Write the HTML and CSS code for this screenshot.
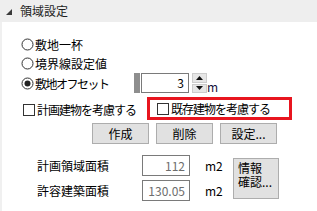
FILE: index.html
```html
<!DOCTYPE html>
<html lang="ja">
<head>
<meta charset="utf-8">
<link rel="stylesheet" href="styles.css">
</head>
<body>
<div class="header">
  <svg class="tri" width="6" height="6" viewBox="0 0 6 6"><polygon points="6,0 6,6 0,6" fill="#3a3a3a"/></svg>
  <span class="title">領域設定</span>
</div>
<div class="panel">
  <div class="radio-row">
    <svg class="radio" width="13" height="13" viewBox="0 0 13 13"><circle cx="6.5" cy="6.5" r="5.5" fill="#fff" stroke="#333" stroke-width="1"/></svg>
    <span>敷地一杯</span>
  </div>
  <div class="radio-row">
    <svg class="radio" width="13" height="13" viewBox="0 0 13 13"><circle cx="6.5" cy="6.5" r="5.5" fill="#fff" stroke="#333" stroke-width="1"/></svg>
    <span>境界線設定値</span>
  </div>
  <div class="offset-row">
    <div class="radio-row offset-label">
      <svg class="radio" width="13" height="13" viewBox="0 0 13 13"><circle cx="6.5" cy="6.5" r="5.5" fill="#fff" stroke="#333" stroke-width="1"/><circle cx="6.5" cy="6.5" r="3" fill="#222"/></svg>
      <span class="tighter">敷地オフセット</span>
    </div>
    <span class="grip"></span>
    <span class="num">3</span>
    <span class="spin">
      <span class="sb"><svg width="7" height="4" viewBox="0 0 7 4"><polygon points="3.5,0 7,4 0,4" fill="#111"/></svg></span>
      <span class="sb"><svg width="7" height="4" viewBox="0 0 7 4"><polygon points="0,0 7,0 3.5,4" fill="#111"/></svg></span>
    </span>
    <span class="unit">m</span>
  </div>
  <div class="check-row">
    <div class="check-item first">
      <span class="box"></span><span class="tight">計画建物を考慮する</span>
    </div>
    <div class="check-item highlight">
      <span class="box"></span><span class="tight">既存建物を考慮する</span>
    </div>
  </div>
  <div class="buttons">
    <button class="btn">作成</button>
    <button class="btn">削除</button>
    <button class="btn">設定...</button>
  </div>
  <div class="areas">
    <span class="lbl">計画領域面積</span>
    <span class="val">112</span>
    <span class="m2">m2</span>
    <button class="info"><span class="line">情報</span><span class="line">確認...</span></button>
    <span class="lbl">許容建築面積</span>
    <span class="val">130.05</span>
    <span class="m2">m2</span>
  </div>
</div>
</body>
</html>
```

FILE: styles.css
```css
html, body {
  margin: 0;
  padding: 0;
}
body {
  width: 317px;
  height: 211px;
  overflow: hidden;
  background: #fff;
  color: #000;
  font-family: "Noto Sans CJK JP", "Noto Sans", sans-serif;
  font-size: 12px;
}
.header {
  height: 22px;
  background: #eeeeee;
  display: flex;
  align-items: center;
  padding-left: 6px;
}
.tri {
  margin-right: 8px;
  margin-top: 2px;
}
.title {
  color: #1e1e1e;
  line-height: 22px;
}
.panel {
  box-sizing: border-box;
  height: 189px;
  border-left: 2px solid #f0f0f0;
  padding-top: 13px;
}
.tight {
  letter-spacing: -1px;
}
.tighter {
  letter-spacing: -1.5px;
}
.radio-row {
  display: flex;
  align-items: center;
  height: 19px;
  padding-left: 19px;
  gap: 1px;
  line-height: 19px;
}
.radio {
  flex: none;
}
.offset-row {
  display: flex;
  align-items: center;
  height: 20px;
}
.offset-label {
  box-sizing: border-box;
  width: 132px;
  height: 20px;
}
.grip {
  width: 6px;
  height: 20px;
  background: #8e8e8e;
  margin-right: 1px;
}
.num {
  box-sizing: border-box;
  width: 48px;
  height: 20px;
  border: 1px solid #7a7a7a;
  text-align: right;
  padding-right: 4px;
  line-height: 18px;
}
.spin {
  margin-left: 3px;
  width: 15px;
  height: 20px;
  display: flex;
  flex-direction: column;
  gap: 1px;
}
.sb {
  box-sizing: border-box;
  flex: 1;
  background: #e6e6e6;
  border: 1px solid #cccccc;
  display: flex;
  align-items: center;
  justify-content: center;
}
.unit {
  align-self: flex-end;
  line-height: 12px;
  margin-left: 0;
  color: #14143c;
}
.check-row {
  margin-top: 4px;
  display: flex;
  align-items: center;
  height: 23px;
}
.check-item {
  box-sizing: border-box;
  display: flex;
  align-items: center;
  gap: 2px;
  height: 23px;
  width: 145px;
  line-height: 17px;
}
.check-item.first {
  padding-left: 21px;
  padding-top: 2px;
}
.check-item.highlight {
  border: 3px solid #e8151f;
  padding-left: 7px;
}
.box {
  box-sizing: border-box;
  width: 12px;
  height: 12px;
  border: 1px solid #333;
  background: #fff;
  flex: none;
}
.buttons {
  margin-top: 3px;
  display: flex;
  gap: 7px;
  padding-left: 90px;
}
.btn, .info {
  box-sizing: border-box;
  margin: 0;
  background: #e1e1e1;
  border: 1px solid #adadad;
  font-family: inherit;
  font-size: 12px;
  color: #000;
  padding: 0;
}
.btn {
  width: 57px;
  height: 21px;
  line-height: 19px;
}
.areas {
  margin-top: 11px;
  display: grid;
  grid-template-columns: 105px 48px 43px 46px;
  grid-template-rows: 21px 21px;
  row-gap: 4px;
  padding-left: 35px;
}
.lbl {
  line-height: 21px;
}
.val {
  box-sizing: border-box;
  border: 1px solid #7a7a7a;
  text-align: right;
  padding-right: 4px;
  line-height: 19px;
  color: #6d6d6d;
}
.m2 {
  padding-left: 15px;
  line-height: 21px;
}
.info {
  grid-column: 4;
  grid-row: 1 / 3;
  align-self: center;
  width: 46px;
  height: 41px;
  text-align: left;
  padding: 2px 0 0 4px;
  display: flex;
  flex-direction: column;
  justify-content: flex-start;
  align-items: flex-start;
}
.line {
  display: block;
  height: 14px;
  line-height: 14px;
  white-space: nowrap;
}
```
